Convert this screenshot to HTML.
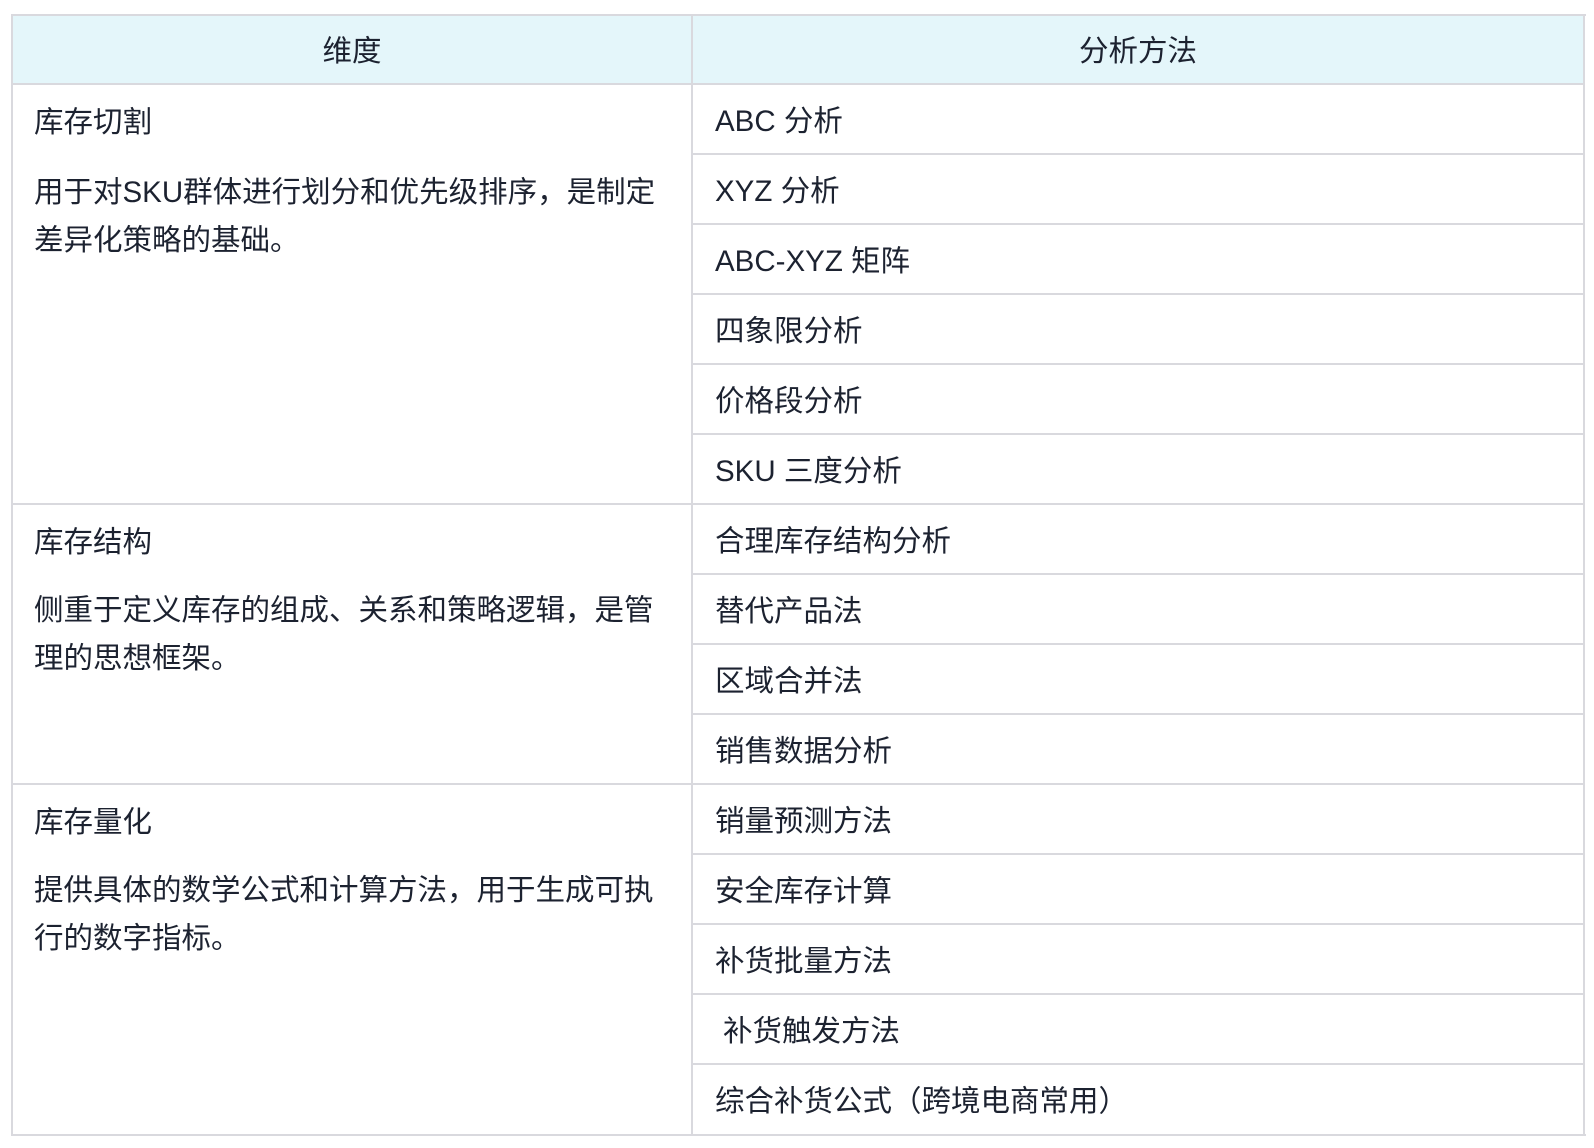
<!DOCTYPE html>
<html><head><meta charset="utf-8"><style>
body{margin:0;width:1594px;height:1148px;background:#fff;position:relative;overflow:hidden;font-family:"Liberation Sans","Noto Sans CJK SC",sans-serif;font-size:29.5px;color:#1c2230}
.t{position:absolute;white-space:nowrap;line-height:48px}
.h{position:absolute;background:#e4f6fa;left:12px;top:15px;width:1572px;height:69px}
.ln{position:absolute;background:#d9d9de}
</style></head><body>
<div class="h"></div>
<div class="ln" style="left:12px;top:14px;width:1574px;height:2px"></div>
<div class="ln" style="left:12px;top:1134px;width:1574px;height:2px"></div>
<div class="ln" style="left:11px;top:14px;width:2px;height:1122px"></div>
<div class="ln" style="left:1583px;top:14px;width:2px;height:1122px"></div>
<div class="ln" style="left:691px;top:14px;width:2px;height:1122px"></div>
<div class="ln" style="left:12px;top:83px;width:1572px;height:2px"></div>
<div class="ln" style="left:12px;top:503px;width:1572px;height:2px"></div>
<div class="ln" style="left:12px;top:783px;width:1572px;height:2px"></div>
<div class="ln" style="left:692px;top:153px;width:892px;height:2px"></div>
<div class="ln" style="left:692px;top:223px;width:892px;height:2px"></div>
<div class="ln" style="left:692px;top:293px;width:892px;height:2px"></div>
<div class="ln" style="left:692px;top:363px;width:892px;height:2px"></div>
<div class="ln" style="left:692px;top:433px;width:892px;height:2px"></div>
<div class="ln" style="left:692px;top:573px;width:892px;height:2px"></div>
<div class="ln" style="left:692px;top:643px;width:892px;height:2px"></div>
<div class="ln" style="left:692px;top:713px;width:892px;height:2px"></div>
<div class="ln" style="left:692px;top:853px;width:892px;height:2px"></div>
<div class="ln" style="left:692px;top:923px;width:892px;height:2px"></div>
<div class="ln" style="left:692px;top:993px;width:892px;height:2px"></div>
<div class="ln" style="left:692px;top:1063px;width:892px;height:2px"></div>

<div class="t" style="left:12px;width:680px;text-align:center;top:28px">维度</div>
<div class="t" style="left:692px;width:892px;text-align:center;top:28px">分析方法</div>

<div class="t" style="left:34px;top:99px">库存切割</div>
<div class="t" style="left:34px;top:169px">用于对SKU群体进行划分和优先级排序，是制定<br>差异化策略的基础。</div>
<div class="t" style="left:34px;top:519px">库存结构</div>
<div class="t" style="left:34px;top:587px">侧重于定义库存的组成、关系和策略逻辑，是管<br>理的思想框架。</div>
<div class="t" style="left:34px;top:799px">库存量化</div>
<div class="t" style="left:34px;top:867px">提供具体的数学公式和计算方法，用于生成可执<br>行的数字指标。</div>

<div class="t" style="left:715px;top:98px">ABC 分析</div>
<div class="t" style="left:715px;top:168px">XYZ 分析</div>
<div class="t" style="left:715px;top:238px">ABC-XYZ 矩阵</div>
<div class="t" style="left:715px;top:308px">四象限分析</div>
<div class="t" style="left:715px;top:378px">价格段分析</div>
<div class="t" style="left:715px;top:448px">SKU 三度分析</div>
<div class="t" style="left:715px;top:518px">合理库存结构分析</div>
<div class="t" style="left:715px;top:588px">替代产品法</div>
<div class="t" style="left:715px;top:658px">区域合并法</div>
<div class="t" style="left:715px;top:728px">销售数据分析</div>
<div class="t" style="left:715px;top:798px">销量预测方法</div>
<div class="t" style="left:715px;top:868px">安全库存计算</div>
<div class="t" style="left:715px;top:938px">补货批量方法</div>
<div class="t" style="left:723px;top:1008px">补货触发方法</div>
<div class="t" style="left:715px;top:1078px">综合补货公式（跨境电商常用）</div>
</body></html>
